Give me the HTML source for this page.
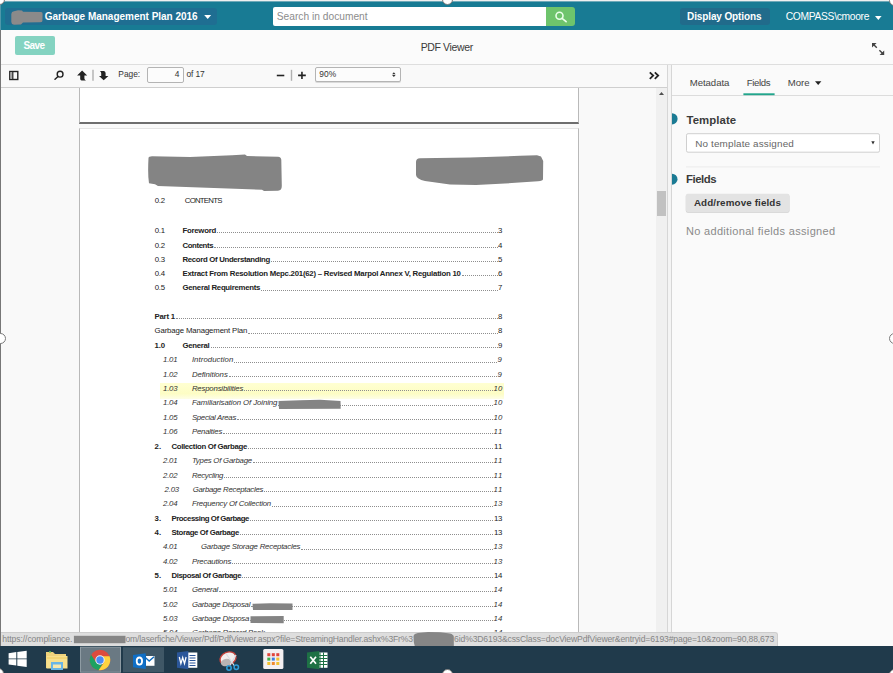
<!DOCTYPE html>
<html>
<head>
<meta charset="utf-8">
<title>Garbage Management Plan 2016</title>
<style>
*{box-sizing:border-box;margin:0;padding:0}
html,body{width:893px;height:673px;overflow:hidden;background:#fff}
body{position:relative;font-family:"Liberation Sans",sans-serif;font-size:11px;color:#333}
.abs{position:absolute}
/* header */
#topline{left:0;top:0;width:893px;height:1px;background:#f0f0f0}
#hdr{left:0;top:2px;width:893px;height:28px;background:#187b94;box-shadow:0 -1px 0 #6fa9b8}
#title{left:5px;top:6px;width:211.6px;height:17px;background:#1f6e92;border-radius:3px}
#search{left:272.7px;top:4.7px;width:273.3px;height:19.3px;background:#fff;border-radius:2px 0 0 2px}
#sbtn{left:545.5px;top:4.7px;width:29.6px;height:19.3px;background:#6ec46c;border-radius:0 3px 3px 0}
#dopt{left:679.5px;top:5.5px;width:90px;height:17.5px;background:#216b8b;border-radius:3px}
/* second bar */
#bar2{left:0;top:30px;width:893px;height:35px;background:#fbfbfb;border-bottom:1px solid #dedede}
#save{left:14.5px;top:6.4px;width:40.2px;height:18.3px;background:#84d3c1;border-radius:2px}
/* toolbar */
#tb{left:0;top:65px;width:668px;height:23px;background:#f9f9f9;border-bottom:1px solid #cfcfcf}
#pgin{left:147.4px;top:2.4px;width:37px;height:15.2px;border:1px solid #b4b4b4;border-radius:2px;background:#fcfcfc}
#zoomsel{left:314.7px;top:2.2px;width:86px;height:15.3px;border:1px solid #b4b4b4;border-radius:2px;background:#fcfcfc;box-shadow:0 1px 0 rgba(0,0,0,.12)}
/* viewer */
#viewer{left:0;top:88px;width:668px;height:558px;background:#f9f9f9;overflow:hidden}
.page{position:absolute;left:79px;width:500px;background:#fff;border-left:1px solid #b9b9b9;border-right:1px solid #b9b9b9;border-bottom:2px solid #6e6e6e;border-top:1px solid #e4e4e4}
#scroll{left:656px;top:0;width:12px;height:558px;background:#f0f0f0}
#thumb{left:657px;top:102.7px;width:8.5px;height:25.3px;background:#c1c1c1}
#divider{left:667px;top:65px;width:5px;height:581px;background:#f4f4f4;border-left:1px solid #d6d6d6;border-right:1px solid #d6d6d6}
/* pdf text */
.pdf{font-size:7.8px;color:#222;line-height:10px;white-space:nowrap}
.dots{height:1px;border-bottom:1px dotted #8e8e8e}
#pg span{line-height:10px}
.b{font-weight:bold}
.i{font-style:italic;color:#333}
/* right panel */
#rp{left:672px;top:65px;width:221px;height:581px;background:#fafafa}
/* status + taskbar */
#status{left:0;top:632px;width:778px;height:14px;background:#dedede;border-top:1px solid #cdcdcd;border-right:1px solid #cdcdcd;border-radius:0 3px 0 0}
#ov span{position:absolute;white-space:nowrap}
.handle{position:absolute;width:11px;height:11px;border-radius:50%;background:#fff;border:1.5px solid #7a7a7a}
</style>
</head>
<body>
<div class="abs" id="hdr">
  <div class="abs" id="title"><svg class="abs" style="left:0;top:0" width="212" height="17" viewBox="5 8 212 17"><path fill="#8b8a8a" d="M11.3,14 Q11.5,11.5 14,11.2 L18,10.2 L22,10.4 L23,11.8 L41,12 Q42.7,12.2 42.6,14 L42.4,21 Q42.3,22.3 40,22.3 L23,22.5 L21,24.5 L14,24.7 Q11.4,24.5 11.3,22 Z"/><path fill="#fff" d="M204.2,14.9 H211.2 L207.7,19.1 Z"/></svg></div>
  <div class="abs" id="search"></div>
  <div class="abs" id="sbtn"><svg class="abs" style="left:0;top:0" width="30" height="20" viewBox="545.5 6.7 30 20"><circle cx="559" cy="15.4" r="3.5" fill="none" stroke="#eaffea" stroke-width="1.6"/><path d="M561.6,18 L565.6,21.3" stroke="#eaffea" stroke-width="1.7" stroke-linecap="round"/></svg></div>
  <div class="abs" id="dopt"></div>
  <svg class="abs" style="left:875px;top:14px" width="7" height="4" viewBox="0 0 7 4"><path fill="#fff" d="M0,0 H6.6 L3.3,3.9 Z"/></svg>
</div>
<div class="abs" id="topline"></div>

<div class="abs" id="bar2">
  
  <div class="abs" id="save"></div>
  <svg class="abs" style="left:871px;top:12px" width="14" height="14" viewBox="871 42 14 14"><path d="M872,43 H876.6 L872,47.6 Z M884.2,55 H879.6 L884.2,50.4 Z" fill="#444"/><path d="M873.5,44.5 L876.8,47.8 M882.7,53.5 L879.4,50.2" stroke="#444" stroke-width="1.4"/></svg>
</div>

<div class="abs" id="tb">
  <div class="abs" id="pgin"></div>
  <div class="abs" id="zoomsel"></div>
  <svg class="abs" style="left:0;top:0" width="668" height="23" viewBox="0 65 668 23">
    <rect x="9.8" y="71.5" width="8" height="8" fill="none" stroke="#222" stroke-width="1.4"/>
    <rect x="10.4" y="72.1" width="2" height="6.8" fill="#a5a5a5"/><path d="M12.8,71.5 V79.5" stroke="#222" stroke-width="1.2"/>
    <circle cx="60.1" cy="74.2" r="2.9" fill="none" stroke="#222" stroke-width="1.4"/>
    <path d="M58,76.5 L55,79.2" stroke="#222" stroke-width="1.5" stroke-linecap="round"/>
    <path fill="#222" d="M82.1,70.6 L87.2,75.6 H84.4 V78.6 Q84.6,80 86,80.6 H81.6 Q80.2,80.3 80.2,78.8 V75.6 H77.1 Z"/>
    <path d="M93,69.8 V80.8" stroke="#b0b0b0" stroke-width="1.4"/>
    <path fill="#222" d="M103.7,80.2 L108.4,76 H105.6 V73 Q105.4,71.6 104,71.1 H99.9 Q101.2,71.8 101.2,73.2 V76 H99 Z"/>
    <path d="M276.8,75.5 H284.3" stroke="#222" stroke-width="1.6"/>
    <path d="M291.5,69.8 V80.8" stroke="#b0b0b0" stroke-width="1.4"/>
    <path d="M298.1,75.4 H305.8 M301.95,71.7 V79.1" stroke="#222" stroke-width="1.6"/>
    <path fill="#333" d="M393.85,72.2 L395.6,74.2 H392.1 Z M393.85,77.1 L395.6,75.1 H392.1 Z"/>
    <path d="M649.8,72.3 L653.2,75.6 L649.8,78.9 M654.8,72.3 L658.2,75.6 L654.8,78.9" fill="none" stroke="#222" stroke-width="1.8"/>
  </svg>
</div>

<div class="abs" id="viewer">
  <div class="page" style="top:-10px;height:46px"></div>
  <div class="page" style="top:39.5px;height:540px"></div>
  <div class="pdf" id="pg">
<div class="abs" style="left:160px;top:295px;width:344px;height:16px;background:linear-gradient(#ffffd2,#fdfdc4 65%,#fefee6)"></div>
<span class="abs" id="n0" style="left:154.7px;top:107.7px;letter-spacing:-0.172px">0.2</span>
<span class="abs" id="t0" style="left:184.8px;top:107.7px;letter-spacing:-0.756px">CONTENTS</span>
<span class="abs" id="n1" style="left:154.7px;top:138.2px;letter-spacing:-0.172px">0.1</span>
<span class="abs b" id="t1" style="left:182.5px;top:138.2px;letter-spacing:-0.262px">Foreword</span>
<span class="abs" id="p1" style="left:498.1px;top:138.2px;letter-spacing:0.000px">3</span>
<div class="abs dots" style="left:217px;top:144px;width:281px"></div>
<span class="abs" id="n2" style="left:154.7px;top:152.5px;letter-spacing:-0.172px">0.2</span>
<span class="abs b" id="t2" style="left:182.5px;top:152.5px;letter-spacing:-0.400px">Contents</span>
<span class="abs" id="p2" style="left:498.1px;top:152.5px;letter-spacing:0.000px">4</span>
<div class="abs dots" style="left:214px;top:159px;width:284px"></div>
<span class="abs" id="n3" style="left:154.7px;top:166.7px;letter-spacing:-0.172px">0.3</span>
<span class="abs b" id="t3" style="left:182.5px;top:166.7px;letter-spacing:-0.322px">Record Of Understanding</span>
<span class="abs" id="p3" style="left:498.1px;top:166.7px;letter-spacing:0.000px">5</span>
<div class="abs dots" style="left:271px;top:173px;width:227px"></div>
<span class="abs" id="n4" style="left:154.7px;top:181.1px;letter-spacing:-0.172px">0.4</span>
<span class="abs b" id="t4" style="left:182.5px;top:181.1px;letter-spacing:-0.232px">Extract From Resolution Mepc.201(62) – Revised Marpol Annex V, Regulation 10</span>
<span class="abs" id="p4" style="left:498.1px;top:181.1px;letter-spacing:0.000px">6</span>
<div class="abs dots" style="left:462px;top:187px;width:36px"></div>
<span class="abs" id="n5" style="left:154.7px;top:195.3px;letter-spacing:-0.172px">0.5</span>
<span class="abs b" id="t5" style="left:182.5px;top:195.3px;letter-spacing:-0.279px">General Requirements</span>
<span class="abs" id="p5" style="left:498.1px;top:195.3px;letter-spacing:0.000px">7</span>
<div class="abs dots" style="left:261px;top:202px;width:237px"></div>
<span class="abs b" id="t6" style="left:154.5px;top:224.3px;letter-spacing:-0.214px">Part 1</span>
<span class="abs" id="p6" style="left:498.1px;top:224.3px;letter-spacing:0.000px">8</span>
<div class="abs dots" style="left:176px;top:230px;width:322px"></div>
<span class="abs" id="t7" style="left:154.5px;top:238.4px;letter-spacing:-0.136px">Garbage Management Plan</span>
<span class="abs" id="p7" style="left:498.1px;top:238.4px;letter-spacing:0.000px">8</span>
<div class="abs dots" style="left:248px;top:245px;width:250px"></div>
<span class="abs b" id="n8" style="left:154.5px;top:252.9px;letter-spacing:-0.172px">1.0</span>
<span class="abs b" id="t8" style="left:182.6px;top:252.9px;letter-spacing:-0.324px">General</span>
<span class="abs" id="p8" style="left:498.1px;top:252.9px;letter-spacing:0.000px">9</span>
<div class="abs dots" style="left:211px;top:259px;width:287px"></div>
<span class="abs i" id="n9" style="left:163.0px;top:267.3px;letter-spacing:-0.196px">1.01</span>
<span class="abs i" id="t9" style="left:191.9px;top:267.3px;letter-spacing:0.059px">Introduction</span>
<span class="abs i" id="p9" style="left:497.6px;top:267.3px;letter-spacing:0.000px">9</span>
<div class="abs dots" style="left:234px;top:274px;width:263px"></div>
<span class="abs i" id="n10" style="left:163.0px;top:281.6px;letter-spacing:-0.196px">1.02</span>
<span class="abs i" id="t10" style="left:191.9px;top:281.6px;letter-spacing:-0.051px">Definitions</span>
<span class="abs i" id="p10" style="left:497.6px;top:281.6px;letter-spacing:0.000px">9</span>
<div class="abs dots" style="left:229px;top:288px;width:268px"></div>
<span class="abs i" id="n11" style="left:163.0px;top:295.9px;letter-spacing:-0.196px">1.03</span>
<span class="abs i" id="t11" style="left:191.9px;top:295.9px;letter-spacing:-0.185px">Responsibilities</span>
<span class="abs i" id="p11" style="left:493.4px;top:295.9px;letter-spacing:0.213px">10</span>
<div class="abs dots" style="left:244px;top:302px;width:249px"></div>
<span class="abs i" id="n12" style="left:163.0px;top:310.4px;letter-spacing:-0.196px">1.04</span>
<span class="abs i" id="t12" style="left:191.9px;top:310.4px;letter-spacing:-0.082px">Familiarisation Of Joining</span>
<span class="abs i" id="p12" style="left:493.4px;top:310.4px;letter-spacing:0.213px">10</span>
<div class="abs dots" style="left:278px;top:317px;width:215px"></div>
<span class="abs i" id="n13" style="left:163.0px;top:324.7px;letter-spacing:-0.196px">1.05</span>
<span class="abs i" id="t13" style="left:191.9px;top:324.7px;letter-spacing:-0.286px">Special Areas</span>
<span class="abs i" id="p13" style="left:493.4px;top:324.7px;letter-spacing:0.213px">10</span>
<div class="abs dots" style="left:237px;top:331px;width:256px"></div>
<span class="abs i" id="n14" style="left:163.0px;top:339.1px;letter-spacing:-0.196px">1.06</span>
<span class="abs i" id="t14" style="left:191.9px;top:339.1px;letter-spacing:-0.210px">Penalties</span>
<span class="abs i" id="p14" style="left:493.4px;top:339.1px;letter-spacing:0.806px">11</span>
<div class="abs dots" style="left:223px;top:345px;width:270px"></div>
<span class="abs b" id="n15" style="left:154.5px;top:353.8px;letter-spacing:0.284px">2.</span>
<span class="abs b" id="t15" style="left:171.4px;top:353.8px;letter-spacing:-0.321px">Collection Of Garbage</span>
<span class="abs" id="p15" style="left:493.9px;top:353.8px;letter-spacing:0.306px">11</span>
<div class="abs dots" style="left:248px;top:360px;width:245px"></div>
<span class="abs i" id="n16" style="left:163.0px;top:368.1px;letter-spacing:-0.196px">2.01</span>
<span class="abs i" id="t16" style="left:191.9px;top:368.1px;letter-spacing:-0.224px">Types Of Garbage</span>
<span class="abs i" id="p16" style="left:493.4px;top:368.1px;letter-spacing:0.806px">11</span>
<div class="abs dots" style="left:253px;top:374px;width:240px"></div>
<span class="abs i" id="n17" style="left:163.0px;top:382.5px;letter-spacing:-0.196px">2.02</span>
<span class="abs i" id="t17" style="left:191.9px;top:382.5px;letter-spacing:-0.302px">Recycling</span>
<span class="abs i" id="p17" style="left:493.4px;top:382.5px;letter-spacing:0.806px">11</span>
<div class="abs dots" style="left:224px;top:389px;width:269px"></div>
<span class="abs i" id="n18" style="left:164.6px;top:396.9px;letter-spacing:-0.196px">2.03</span>
<span class="abs i" id="t18" style="left:192.7px;top:396.9px;letter-spacing:-0.262px">Garbage Receptacles</span>
<span class="abs i" id="p18" style="left:493.4px;top:396.9px;letter-spacing:0.806px">11</span>
<div class="abs dots" style="left:264px;top:403px;width:229px"></div>
<span class="abs i" id="n19" style="left:163.0px;top:411.3px;letter-spacing:-0.196px">2.04</span>
<span class="abs i" id="t19" style="left:191.9px;top:411.3px;letter-spacing:-0.197px">Frequency Of Collection</span>
<span class="abs i" id="p19" style="left:493.4px;top:411.3px;letter-spacing:0.213px">13</span>
<div class="abs dots" style="left:272px;top:418px;width:221px"></div>
<span class="abs b" id="n20" style="left:154.5px;top:425.7px;letter-spacing:0.284px">3.</span>
<span class="abs b" id="t20" style="left:171.4px;top:425.7px;letter-spacing:-0.434px">Processing Of Garbage</span>
<span class="abs" id="p20" style="left:493.9px;top:425.7px;letter-spacing:-0.287px">13</span>
<div class="abs dots" style="left:250px;top:432px;width:243px"></div>
<span class="abs b" id="n21" style="left:154.5px;top:440.0px;letter-spacing:0.284px">4.</span>
<span class="abs b" id="t21" style="left:171.4px;top:440.0px;letter-spacing:-0.339px">Storage Of Garbage</span>
<span class="abs" id="p21" style="left:493.9px;top:440.0px;letter-spacing:-0.287px">13</span>
<div class="abs dots" style="left:240px;top:446px;width:253px"></div>
<span class="abs i" id="n22" style="left:163.0px;top:454.4px;letter-spacing:-0.196px">4.01</span>
<span class="abs i" id="t22" style="left:200.9px;top:454.4px;letter-spacing:-0.203px">Garbage Storage Receptacles</span>
<span class="abs i" id="p22" style="left:493.4px;top:454.4px;letter-spacing:0.213px">13</span>
<div class="abs dots" style="left:301px;top:461px;width:192px"></div>
<span class="abs i" id="n23" style="left:163.0px;top:468.7px;letter-spacing:-0.196px">4.02</span>
<span class="abs i" id="t23" style="left:191.9px;top:468.7px;letter-spacing:-0.179px">Precautions</span>
<span class="abs i" id="p23" style="left:493.4px;top:468.7px;letter-spacing:0.213px">13</span>
<div class="abs dots" style="left:232px;top:475px;width:261px"></div>
<span class="abs b" id="n24" style="left:154.5px;top:483.0px;letter-spacing:0.284px">5.</span>
<span class="abs b" id="t24" style="left:171.4px;top:483.0px;letter-spacing:-0.385px">Disposal Of Garbage</span>
<span class="abs" id="p24" style="left:493.9px;top:483.0px;letter-spacing:-0.287px">14</span>
<div class="abs dots" style="left:242px;top:489px;width:251px"></div>
<span class="abs i" id="n25" style="left:163.0px;top:497.2px;letter-spacing:-0.196px">5.01</span>
<span class="abs i" id="t25" style="left:191.9px;top:497.2px;letter-spacing:-0.225px">General</span>
<span class="abs i" id="p25" style="left:493.4px;top:497.2px;letter-spacing:0.213px">14</span>
<div class="abs dots" style="left:219px;top:503px;width:274px"></div>
<span class="abs i" id="n26" style="left:163.0px;top:511.6px;letter-spacing:-0.196px">5.02</span>
<span class="abs i" id="t26" style="left:191.9px;top:511.6px;letter-spacing:-0.261px">Garbage Disposal</span>
<span class="abs i" id="p26" style="left:493.4px;top:511.6px;letter-spacing:0.213px">14</span>
<div class="abs dots" style="left:251px;top:518px;width:242px"></div>
<span class="abs i" id="n27" style="left:163.0px;top:525.8px;letter-spacing:-0.196px">5.03</span>
<span class="abs i" id="t27" style="left:191.9px;top:525.8px;letter-spacing:-0.228px">Garbage Disposa</span>
<span class="abs i" id="p27" style="left:493.4px;top:525.8px;letter-spacing:0.213px">14</span>
<div class="abs dots" style="left:250px;top:532px;width:243px"></div>
<span class="abs i" id="n28" style="left:163.0px;top:540.2px;letter-spacing:-0.196px">5.04</span>
<span class="abs i" id="t28" style="left:191.9px;top:540.2px;letter-spacing:-0.250px">Garbage Record Book</span>
<span class="abs i" id="p28" style="left:493.4px;top:540.2px;letter-spacing:0.213px">14</span>
<div class="abs dots" style="left:266px;top:546px;width:227px"></div>
  </div>
  <svg class="abs" style="left:0;top:0" width="668" height="558" viewBox="0 88 668 558">
    <path fill="#848484" d="M148.5,158 Q148.6,156.2 152,156.2 L190,157 L232,155.2 L245,154.4 L247,156 L278,156.8 Q281.3,157 281.3,160 L281.8,186 Q281.8,190.6 278,190.7 L264,191 L262,189.8 L200,187.6 L158,186 L155,184.2 L149,183.2 Q147.6,175 148.5,158 Z"/>
    <path fill="#848484" d="M416,162 Q416,158.3 420,158.2 L470,157.5 L520,155.8 L537,155.2 L541,156.5 L543.2,161 L543,179 Q543,181 538,181.2 L505,183.5 L476,185.1 L450,184.5 L425,181 Q416.5,179 416,175 Z"/>
    <path fill="#848484" d="M278.5,401 L300,400.2 L320,399.8 L340.5,401 L340.7,408.8 L279,409 Z"/>
    <path fill="#848484" d="M252.5,603.8 L270,603.2 L292.5,603.5 L292.5,610 L253,610 Z"/>
    <path fill="#848484" d="M250.5,616.3 L283.7,616 L283.7,623.2 L250.5,623 Z"/>
  </svg>
  <div class="abs" id="scroll"></div>
  <svg class="abs" style="left:659px;top:3.7px" width="5" height="3" viewBox="0 0 5 3"><path d="M2.5 0 L5 3 H0 Z" fill="#505050"/></svg>
  <div class="abs" id="thumb"></div>
</div>
<div class="abs" id="divider"></div>

<div class="abs" id="rp">
  <svg class="abs" style="left:0;top:0" width="221" height="567" viewBox="672 65 221 567">
    <rect x="672" y="95" width="221" height="1" fill="#dcdcdc"/>
    <rect x="743.4" y="93.3" width="31.2" height="1.9" fill="#22a58c"/>
    <path fill="#222" d="M815,81.3 H821.4 L818.2,85.1 Z"/>
    <path fill="#1b7b94" d="M672,113.2 A5.6,5.6 0 0 1 672,124.4 Z"/>
    <path fill="#1b7b94" d="M672,173.7 A5.5,5.5 0 0 1 672,184.7 Z"/>
    <rect x="686.5" y="133.7" width="193" height="18.5" rx="1.5" fill="#fff" stroke="#cfcfcf" stroke-width="1"/>
    <path fill="#333" d="M871.3,141.3 H874.7 L873,144.5 Z"/>
    <rect x="686" y="166.4" width="194" height="1" fill="#ececec"/>
    <rect x="685.8" y="194.6" width="103.7" height="18.2" rx="2" fill="#cfcfcf"/>
    <rect x="685.8" y="193.8" width="103.7" height="18.2" rx="2" fill="#e3e3e3"/>
  </svg>
</div>

<div class="abs" id="status"></div>
<svg class="abs" style="left:0;top:628px" width="893" height="20" viewBox="0 628 893 20">
  <rect x="73.9" y="635.8" width="51.6" height="7.4" fill="#868686"/>
  <path fill="#868686" d="M413.5,636 Q414,633.5 418,633 L428,632 L440,632.3 L450,633.5 Q453.8,634.5 453.8,637 V647 H415 Q413.3,642 413.5,636 Z"/>
</svg>
<div class="abs" style="left:0;top:30px;width:1px;height:616px;background:#777"></div>
<div class="abs" style="left:0;top:2px;width:1px;height:28px;background:#4f97aa"></div>
<svg class="abs" style="left:0;top:646px" width="893" height="27" viewBox="0 646 893 27">
  <rect x="0" y="646" width="893" height="27" fill="#203a4b"/>
  <!-- windows -->
  <path fill="#fff" d="M8.6,653.2 L16.3,652.1 V658.4 H8.6 Z M17.3,652 L26.7,650.7 V658.4 H17.3 Z M8.6,659.3 H16.3 V665.6 L8.6,664.5 Z M17.3,659.3 H26.7 V667 L17.3,665.7 Z"/>
  <!-- explorer -->
  <path fill="#efd27c" d="M46,652 H53 L55,654 H66 V668 H46 Z"/>
  <path fill="#f7e08d" d="M46.5,656 H67.5 V668.5 H46.5 Z"/>
  <path fill="#f3d575" d="M47,657 H67 V659 H47 Z"/>
  <path fill="#69b6e6" d="M51,662 H63 V670 H51 Z"/>
  <path fill="#f7e9ae" d="M53,664.5 H61 V668 H53 Z"/>
  <rect x="49" y="651" width="2" height="1.5" fill="#4caf50"/>
  <!-- chrome tile -->
  <rect x="80.5" y="647.2" width="40" height="25" fill="#6a7983" stroke="#8e9ba3" stroke-width="1"/>
  <circle cx="100" cy="660" r="10.3" fill="#dd4b3e"/>
  <path fill="#1da261" d="M91.1,654.8 A10.3,10.3 0 0 0 98.6,670.2 L103.8,662 L96,662.2 Z"/>
  <path fill="#fdd33f" d="M98.6,670.2 A10.3,10.3 0 0 0 109.6,656.3 L100,656.3 L104.2,662.2 Z"/>
  <circle cx="100" cy="660" r="4.7" fill="#f2f2f2"/>
  <circle cx="100" cy="660" r="3.7" fill="#4a8af4"/>
  <!-- outlook tile -->
  <rect x="123" y="647.2" width="41" height="25" fill="#3f5766"/>
  <rect x="144" y="656" width="10.5" height="9.8" fill="#fff"/>
  <path d="M144.5,656.8 L149.2,661 L154,656.8" fill="none" stroke="#0f6cbd" stroke-width="1.4"/>
  <rect x="142" y="655" width="4" height="12" fill="#0a5aa8"/>
  <path fill="#0f6fc6" d="M133,655 L145.7,653.2 V669 L133,667.2 Z"/>
  <ellipse cx="139.4" cy="661.1" rx="2.7" ry="3.6" fill="none" stroke="#fff" stroke-width="1.8"/>
  <!-- word -->
  <rect x="186" y="652.5" width="11.3" height="15.3" fill="#fff"/>
  <path d="M189.5,655.5 H195.5 M189.5,658 H195.5 M189.5,660.5 H195.5 M189.5,663 H195.5 M189.5,665.5 H195.5" stroke="#2b579a" stroke-width="1"/>
  <path fill="#2b579a" d="M177,652.6 L188.3,651 V669.3 L177,667.7 Z"/>
  <path d="M179.3,657 L180.9,663.6 L182.7,657.6 L184.5,663.6 L186.1,657" fill="none" stroke="#fff" stroke-width="1.3"/>
  <!-- snipping tool -->
  <ellipse cx="228" cy="658.5" rx="8.3" ry="6.3" fill="#f3eded" stroke="#c2403a" stroke-width="1.4" transform="rotate(-22 228 658.5)"/>
  <ellipse cx="226" cy="662.5" rx="5.2" ry="3.6" fill="#b9b4b4" transform="rotate(-15 226 662.5)"/>
  <path d="M226,653.5 L234.5,666 M236,655 L229.5,666" stroke="#d8dde2" stroke-width="1.3"/>
  <circle cx="236.3" cy="667.2" r="2.2" fill="none" stroke="#2e9fdc" stroke-width="1.5"/>
  <circle cx="229" cy="668" r="2.2" fill="none" stroke="#2e9fdc" stroke-width="1.5"/>
  <!-- apps -->
  <rect x="263.2" y="649" width="20.2" height="20" rx="1.5" fill="#f3eff1"/>
  <g>
   <rect x="267.3" y="653.2" width="3" height="3" fill="#e0433a"/><rect x="271.8" y="653.2" width="3" height="3" fill="#e0433a"/><rect x="276.3" y="653.2" width="3" height="3" fill="#e0433a"/>
   <rect x="267.3" y="657.6" width="3" height="3" fill="#3fae49"/><rect x="271.8" y="657.6" width="3" height="3" fill="#3f7fe0"/><rect x="276.3" y="657.6" width="3" height="3" fill="#f2c12e"/>
   <rect x="267.3" y="662" width="3" height="3" fill="#f2c12e"/><rect x="271.8" y="662" width="3" height="3" fill="#f08a2e"/><rect x="276.3" y="662" width="3" height="3" fill="#f2c12e"/>
  </g>
  <!-- excel -->
  <rect x="317" y="652.5" width="10.5" height="15.3" fill="#fff"/>
  <path d="M320,652.5 V668 M323.5,652.5 V668 M318,655.5 H327.5 M318,658.5 H327.5 M318,661.5 H327.5 M318,664.5 H327.5" stroke="#1e7145" stroke-width="1"/>
  <path fill="#1e7145" d="M307,652.6 L319.3,651 V669.3 L307,667.7 Z"/>
  <path d="M310.3,656.8 L316,663.8 M316,656.8 L310.3,663.8" stroke="#fff" stroke-width="1.7"/>
</svg>


<div class="handle" style="left:-6.5px;top:-6px"></div>
<div class="handle" style="left:442px;top:-6px"></div>
<div class="handle" style="left:889px;top:-5px"></div>
<div class="handle" style="left:-5.1px;top:332.8px"></div>
<div class="handle" style="left:888.9px;top:332.8px"></div>
<div class="handle" style="left:-7px;top:667.6px"></div>
<div class="handle" style="left:441.8px;top:668.5px"></div>
<div class="handle" style="left:889px;top:668.5px"></div>
<div class="abs" id="ov" style="left:0;top:0;width:893px;height:673px;overflow:hidden;pointer-events:none">
<span id="xttl" style="left:44.7px;top:9.93px;font-size:10px;line-height:13px;letter-spacing:-0.015px;font-weight:bold;color:#fff">Garbage Management Plan 2016</span>
<span id="xsrch" style="left:276.8px;top:9.77px;font-size:10.2px;line-height:13px;letter-spacing:0.011px;color:#8c8c8c">Search in document</span>
<span id="xdopt" style="left:687.1px;top:10.04px;font-size:10px;line-height:13px;letter-spacing:-0.123px;font-weight:bold;color:#fff">Display Options</span>
<span id="xusr" style="left:785.7px;top:9.73px;font-size:10.3px;line-height:13px;letter-spacing:-0.326px;color:#fff">COMPASS\cmoore</span>
<span id="xpv" style="left:420.7px;top:40.06px;font-size:10.5px;line-height:14px;letter-spacing:-0.370px;color:#3a3a3a">PDF Viewer</span>
<span id="xsavet" style="left:23.4px;top:39.33px;font-size:10px;line-height:13px;letter-spacing:-0.520px;font-weight:bold;color:#fff">Save</span>
<span id="xpglbl" style="left:118.3px;top:69.09px;font-size:8.4px;line-height:11px;letter-spacing:0.002px;color:#333">Page:</span>
<span id="xpg4" style="left:174.8px;top:69.09px;font-size:8.4px;line-height:11px;letter-spacing:0.000px;color:#333">4</span>
<span id="xpgof" style="left:186.6px;top:69.09px;font-size:8.4px;line-height:11px;letter-spacing:-0.160px;color:#333">of 17</span>
<span id="xz90" style="left:319.2px;top:69.09px;font-size:8.4px;line-height:11px;letter-spacing:0.167px;color:#333">90%</span>
<span id="xtab1" style="left:689.7px;top:76.67px;font-size:9.6px;line-height:12px;letter-spacing:-0.045px;color:#444">Metadata</span>
<span id="xtab2" style="left:746.7px;top:76.67px;font-size:9.6px;line-height:12px;letter-spacing:-0.359px;color:#444">Fields</span>
<span id="xtab3" style="left:787.8px;top:76.67px;font-size:9.6px;line-height:12px;letter-spacing:-0.020px;color:#444">More</span>
<span id="xtmpl" style="left:686.5px;top:112.55px;font-size:11.4px;line-height:15px;letter-spacing:0.075px;font-weight:bold;color:#3a3a3a">Template</span>
<span id="xnota" style="left:695.2px;top:137.27px;font-size:9.9px;line-height:13px;letter-spacing:0.162px;color:#666">No template assigned</span>
<span id="xflds" style="left:685.9px;top:172.25px;font-size:11.4px;line-height:15px;letter-spacing:-0.444px;font-weight:bold;color:#3a3a3a">Fields</span>
<span id="xaddrm" style="left:693.9px;top:195.80px;font-size:9.8px;line-height:13px;letter-spacing:0.129px;font-weight:bold;color:#333">Add/remove fields</span>
<span id="xnoadd" style="left:685.9px;top:224.19px;font-size:11px;line-height:14px;letter-spacing:0.327px;color:#8a8a8a">No additional fields assigned</span>
<span id="xst1" style="left:2.3px;top:634.42px;font-size:8.6px;line-height:11px;letter-spacing:-0.086px;color:#858585">https://compliance.</span>
<span id="xst2" style="left:125.5px;top:634.42px;font-size:8.6px;line-height:11px;letter-spacing:-0.167px;color:#858585">om/laserfiche/Viewer/Pdf/PdfViewer.aspx?file=StreamingHandler.ashx%3Fr%3</span>
<span id="xst3" style="left:454.1px;top:634.42px;font-size:8.6px;line-height:11px;letter-spacing:-0.137px;color:#858585">6id%3D6193&amp;cssClass=docViewPdfViewer&amp;entryid=6193#page=10&amp;zoom=90,88,673</span>
</div>
</body>
</html>
